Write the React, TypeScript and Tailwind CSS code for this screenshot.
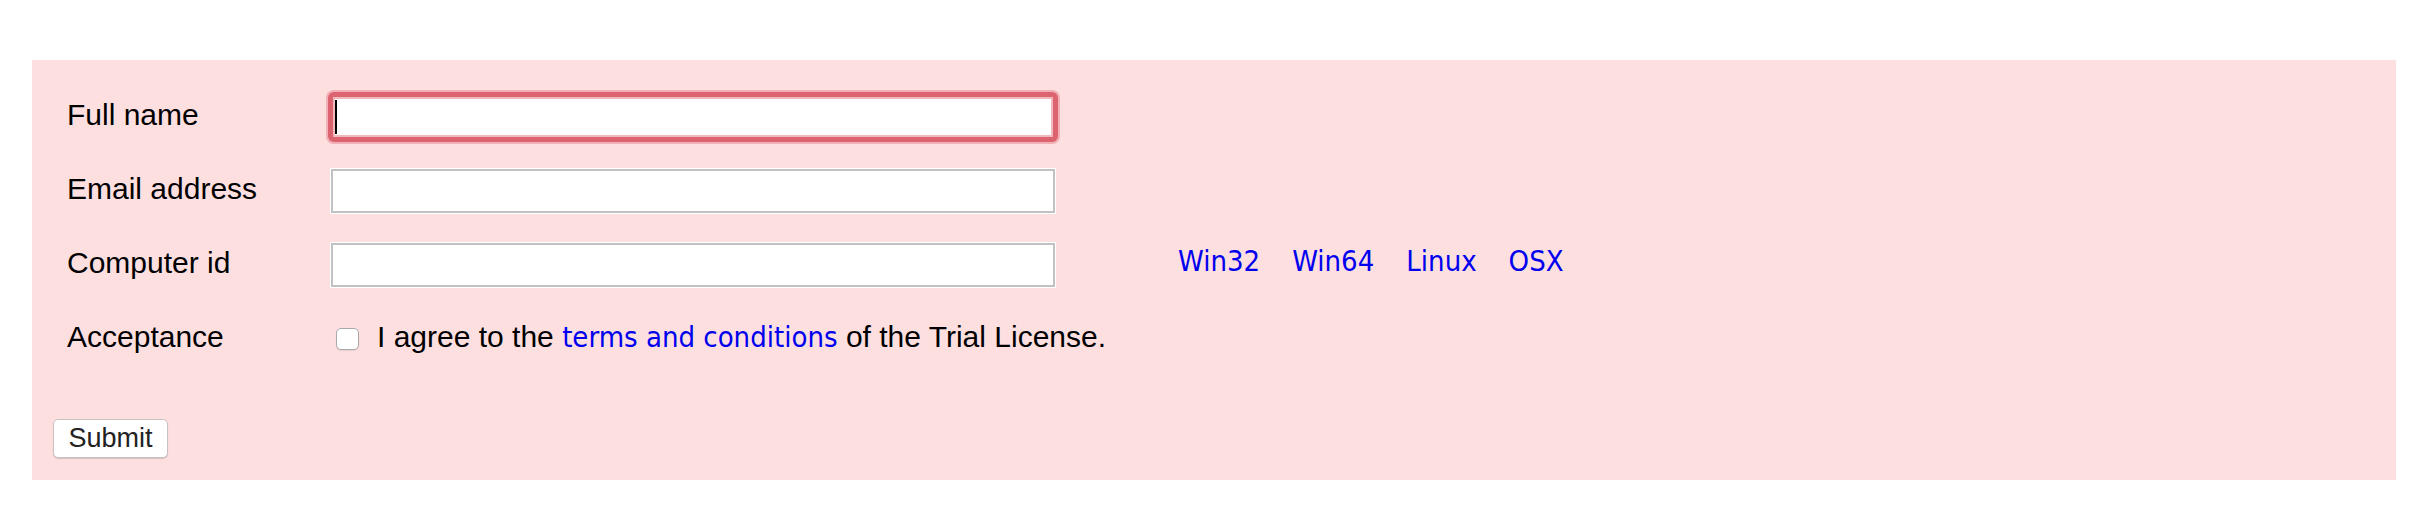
import React from 'react'

const sans = 'font-["Liberation_Sans",Arial,sans-serif]'
const linkFont = 'font-["DejaVu_Sans_Condensed","DejaVu_Sans",Verdana,sans-serif] text-[29px] text-[#0000ee]'

function Field({ label, focused, children }: { label: string; focused?: boolean; children?: React.ReactNode }) {
  return (
    <div className="flex h-[74px] items-center pl-[35px]">
      <label className={`w-[264px] pb-[5px] text-[30px] leading-none text-black ${sans}`}>{label}</label>
      {focused ? (
        <div className="relative h-[44px] w-[724px] rounded-[3px] border-2 border-[#dc6470] bg-white shadow-[0_0_0_3px_#dc6470,0_0_0_5px_#f0b0b5,inset_0_0_0_2px_#f2b9bd]">
          {/* text caret */}
          <span className="absolute left-[2px] top-[3px] h-[34px] w-[2px] bg-black" />
        </div>
      ) : (
        <div className="h-[44px] w-[724px] border-2 border-[#c2c2c2] bg-white shadow-[0_0_0_1px_#ffffff]" />
      )}
      {children}
    </div>
  )
}

export default function App() {
  return (
    <div className="min-h-[532px] bg-white pl-[32px] pr-[18px] pt-[60px]">
      <form className="bg-[#fddfe0] pb-[22px] pt-[20px]" onSubmit={(e) => e.preventDefault()}>
        <Field label="Full name" focused />
        <Field label="Email address" />
        <Field label="Computer id">
          <div className="ml-[123px] flex gap-[32px] pb-[6px]">
            <a href="#" className={linkFont}>Win32</a>
            <a href="#" className={linkFont}>Win64</a>
            <a href="#" className={linkFont}>Linux</a>
            <a href="#" className={linkFont}>OSX</a>
          </div>
        </Field>
        <div className="flex h-[74px] items-center pl-[35px]">
          <span className={`w-[264px] pb-[5px] text-[30px] leading-none text-black ${sans}`}>Acceptance</span>
          <span className="ml-[5px] h-[22px] w-[23px] rounded-[5px] border border-[#a9a9a9] bg-white shadow-[0_1px_1px_rgba(0,0,0,0.08)]" />
          <span className={`ml-[18px] pb-[5px] text-[30px] leading-none text-black ${sans}`}>
            I agree to the{' '}
            <a href="#" className="font-['DejaVu_Sans_Condensed','DejaVu_Sans',Verdana,sans-serif] text-[29px] text-[#0000ee]">
              terms and conditions
            </a>{' '}
            of the Trial License.
          </span>
        </div>
        <div className="mt-[43px] pl-[21px]">
          <button
            type="submit"
            className={`h-[39px] w-[115px] rounded-[5px] border border-[#c9c2c2] bg-white text-[27px] leading-none text-[#222] shadow-[0_1px_1px_rgba(0,0,0,0.15)] ${sans}`}
          >
            Submit
          </button>
        </div>
      </form>
    </div>
  )
}
